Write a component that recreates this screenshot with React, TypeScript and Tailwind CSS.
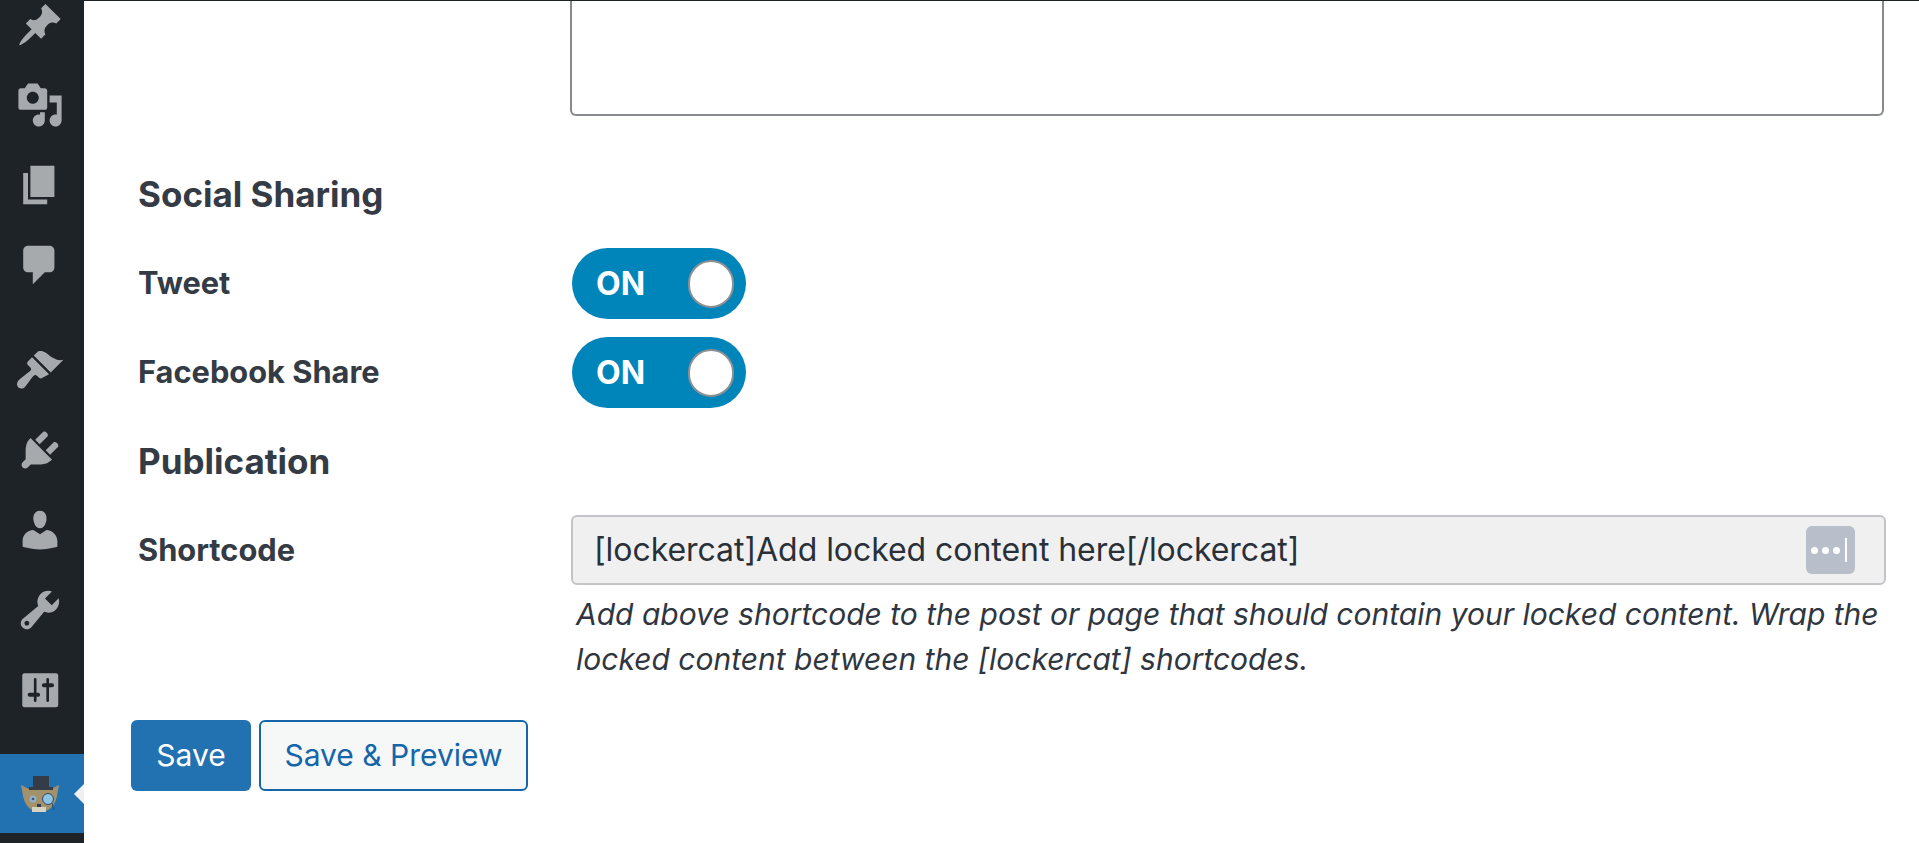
const sans = "font-['Inter','Liberation_Sans',sans-serif]";

const menuTop = [
  'M10.44 3.02l1.82-1.82 6.36 6.35-1.83 1.82c-1.05-.68-2.48-.57-3.41.36l-.75.75c-.92.93-1.04 2.35-.35 3.41l-1.83 1.82-2.41-2.41-2.8 2.79c-.42.42-3.38 2.71-3.8 2.29s1.86-3.39 2.28-3.81l2.79-2.79L4.1 9.36l1.83-1.82c1.05.69 2.48.57 3.4-.36l.75-.75c.93-.92 1.05-2.35.36-3.41z',
  'M13 11V4c0-.55-.45-1-1-1h-1.67L9 1H5L3.67 3H2c-.55 0-1 .45-1 1v7c0 .55.45 1 1 1h10c.55 0 1-.45 1-1zM7 4.5c1.38 0 2.5 1.12 2.5 2.5S8.38 9.5 7 9.5 4.5 8.38 4.5 7 5.62 4.5 7 4.5zM14 6h5v10.5c0 1.38-1.12 2.5-2.5 2.5S14 17.88 14 16.5s1.12-2.5 2.5-2.5c.17 0 .34.02.5.05V9h-3V6zm-4 8.05V13h2v3.5c0 1.38-1.12 2.5-2.5 2.5S7 17.88 7 16.5 8.12 14 9.5 14c.17 0 .34.02.5.05z',
  'M6 15V2h10v13H6zm-1 1h8v2H3V5h2v11z',
  'M5 2h9c1.1 0 2 .9 2 2v7c0 1.1-.9 2-2 2h-2l-5 5v-5H5c-1.1 0-2-.9-2-2V4c0-1.1.9-2 2-2z',
];

const menuBottom = [
  'M14.48 11.06L7.41 3.99l1.5-1.5c.5-.56 2.3-.47 3.51.32 1.21.8 1.43 1.28 2.91 2.1 1.18.64 2.45 1.26 4.45.85zm-.71.71L6.7 4.7 4.93 6.47c-.39.39-.39 1.02 0 1.41l1.06 1.06c.39.39.39 1.03 0 1.42-.6.6-1.43 1.11-2.21 1.7-.78.58-1.66 1.2-2.36 1.9-.6.6-1 1.3-1 2 0 1 .8 1.8 1.8 1.8.6 0 1.1-.3 1.5-.7.7-.7 1.3-1.7 1.9-2.5.58-.78 1.1-1.61 1.7-2.21.39-.39 1.03-.39 1.42 0l.9.9c.39.39 1.02.39 1.41 0z',
  'M13.11 4.36L9.87 7.6 8 5.73l3.24-3.24c.35-.34 1.05-.2 1.56.32.52.51.66 1.21.31 1.55zm-8 1.77l.91-1.12 9.01 9.01-1.19.84c-.71.71-2.63 1.16-3.82 1.16H6.14L4.9 17.26c-.59.59-1.54.59-2.12 0-.59-.58-.59-1.53 0-2.12l1.24-1.24v-3.88c0-1.13.4-3.19 1.09-3.89zm7.26 3.97l3.24-3.24c.34-.35 1.04-.21 1.55.31.52.51.66 1.21.31 1.55l-3.24 3.25z',
  'M10 9.25c-2.27 0-2.73-3.44-2.73-3.44C7 4.02 7.82 2 9.97 2c2.16 0 2.98 2.02 2.71 3.81 0 0-.41 3.44-2.68 3.44zm0 2.57L12.72 10c2.39 0 4.52 2.33 4.52 4.53v2.49s-3.65 1.13-7.24 1.13c-3.65 0-7.24-1.13-7.24-1.13v-2.49c0-2.25 1.94-4.48 4.47-4.48z',
  'M16.68 9.77c-1.34 1.34-3.3 1.67-4.95.99l-5.41 6.52c-.99.99-2.59.99-3.58 0s-.99-2.59 0-3.57l6.52-5.42c-.68-1.65-.35-3.61.99-4.95 1.28-1.28 3.12-1.62 4.72-1.06l-2.89 2.89 2.82 2.82 2.86-2.87c.53 1.58.18 3.39-1.08 4.65zM3.81 16.21c.4.39 1.04.39 1.43 0 .4-.4.4-1.04 0-1.43-.39-.4-1.03-.4-1.43 0-.39.39-.39 1.03 0 1.43z',
];

function MenuIcon({ d }: { d: string }) {
  return (
    <div className="flex h-20 items-center pl-4">
      <svg viewBox="0 0 20 20" className="h-12 w-12 fill-[#a7aaad]">
        <path d={d} />
      </svg>
    </div>
  );
}

function SettingsIcon() {
  return (
    <div className="flex h-20 items-center pl-4">
      <svg viewBox="0 0 20 20" className="h-12 w-12">
        <rect x="2.6" y="3" width="15" height="14.2" rx="1" fill="#a7aaad" />
        <path
          d="M8 5.5v9M6 12h2.9M13.2 5.5v9M11.8 8h3"
          stroke="#1d2327"
          strokeWidth="1.1"
          strokeLinecap="round"
          fill="none"
        />
        <path d="M5.7 12h3.5M11.6 8h3.4" stroke="#1d2327" strokeWidth="1.7" strokeLinecap="round" fill="none" />
      </svg>
    </div>
  );
}

function CatIcon() {
  return (
    <svg viewBox="0 0 40 40" className="h-10 w-10 blur-[0.7px]">
      <path d="M1 11l8 4h22l8-4-2 11q-2 10-9 14-8 4-16 0-7-4-9-14z" fill="#a3916c" />
      <path d="M13 2h16v12H13z" fill="#333c47" />
      <path d="M9 13h24v3H9z" fill="#333c47" />
      <circle cx="13" cy="25" r="3.4" fill="#8fb1cc" />
      <circle cx="13" cy="25" r="1.3" fill="#44586c" />
      <circle cx="28" cy="25" r="5.5" fill="#8cc4e6" stroke="#33475c" />
      <path d="M32 29l2 7" stroke="#33475c" fill="none" />
      <path d="M12 33h14v5H12z" fill="#d8d2c0" />
      <rect x="17" y="30" width="4" height="3" fill="#333c47" />
    </svg>
  );
}

function Toggle() {
  return (
    <div className="ml-px flex h-[71px] w-[174px] items-center justify-between rounded-full bg-[#0085ba] pl-6 pr-3">
      <span className="text-[32px] font-bold text-white">ON</span>
      <div className="h-[48px] w-[46px] rounded-full border-2 border-[#8c8f94] bg-white" />
    </div>
  );
}

function Row({ label, children }: { label: string; children: React.ReactNode }) {
  return (
    <div className="flex items-center">
      <div className="w-[433px] shrink-0 text-[30.8px] font-bold text-[#343b45]">{label}</div>
      {children}
    </div>
  );
}

export default function App() {
  return (
    <div className={`flex h-[843px] overflow-hidden border-t border-[#1d2327] bg-white ${sans}`}>
      <aside className="flex w-[84px] shrink-0 flex-col overflow-hidden bg-[#1d2327]">
        <div className="-mt-4">
          {menuTop.map((d) => (
            <MenuIcon key={d} d={d} />
          ))}
        </div>
        <div className="mt-[25px]">
          {menuBottom.map((d) => (
            <MenuIcon key={d} d={d} />
          ))}
          <SettingsIcon />
        </div>
        <div className="relative mt-6 flex h-[79px] shrink-0 items-center bg-[#2271b1] pl-5">
          <CatIcon />
          <div className="absolute right-0 top-1/2 h-0 w-0 -translate-y-1/2 border-y-[10px] border-r-[10px] border-y-transparent border-r-[#f0f0f1]" />
        </div>
      </aside>

      <main className="min-w-0 flex-1 pl-[47px] pr-[33px]">
        <div className="ml-[439px] mr-[2px] h-[115px] rounded-b-md border-x-2 border-b-2 border-[#868a8f]" />

        <h2 className="ml-[7px] mt-[54px] h-12 text-[35px] leading-[48px] font-bold text-[#343b45]">Social Sharing</h2>

        <div className="ml-[7px] mt-[30px] flex flex-col gap-[18px]">
          <Row label="Tweet">
            <Toggle />
          </Row>
          <Row label="Facebook Share">
            <Toggle />
          </Row>
        </div>

        <h2 className="ml-[7px] mt-[29px] h-12 text-[35px] leading-[48px] font-bold text-[#343b45]">Publication</h2>

        <div className="ml-[7px] mt-[30px]">
          <Row label="Shortcode">
            <div className="flex h-[70px] flex-1 items-center justify-between rounded-md border-2 border-[#c3c4c7] bg-[#f0f0f1] pl-[21px] pr-[29px]">
              <span className="text-[32px] tracking-[-0.05px] text-[#2a3038]">[lockercat]Add locked content here[/lockercat]</span>
              <div className="flex h-12 w-[49px] items-center gap-[4px] rounded-md bg-[#b9bfca] pl-[5px]">
                <span className="h-[7px] w-[7px] rounded-full bg-white" />
                <span className="h-[7px] w-[7px] rounded-full bg-white" />
                <span className="h-[7px] w-[7px] rounded-full bg-white" />
                <span className="ml-[1px] h-[24px] w-[2px] bg-white" />
              </div>
            </div>
          </Row>
        </div>

        <p className="ml-[445px] mt-[7px] text-[30px] leading-[45px] italic text-[#2f3640]">
          Add above shortcode to the post or page that should contain your locked content. Wrap the locked content between the [lockercat] shortcodes.
        </p>

        <div className="mt-[38px] flex gap-2">
          <button className="h-[71px] w-[120px] rounded-md bg-[#2271b1] text-[30px] text-white">Save</button>
          <button className="h-[71px] w-[269px] rounded-md border-2 border-[#1565a9] bg-[#f6f7f7] text-[30px] text-[#1565a9]">Save &amp; Preview</button>
        </div>
      </main>
    </div>
  );
}
